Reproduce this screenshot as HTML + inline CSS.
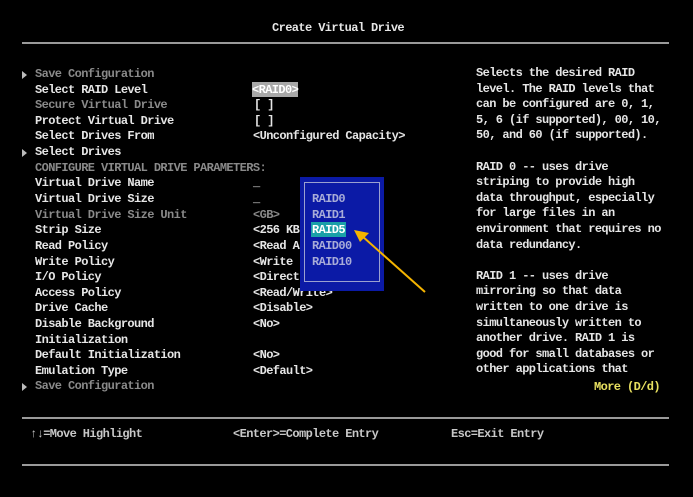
<!DOCTYPE html>
<html><head><style>
body{margin:0;background:#000;width:693px;height:497px;overflow:hidden;position:relative;font-family:"Liberation Mono",monospace;font-size:12px;letter-spacing:-0.6px;font-weight:bold;color:#e6e6e6}
.t{position:absolute;white-space:pre;line-height:16px;height:16px}
.g{color:#8a8a8a}
.hr{position:absolute;left:22px;width:647px;height:2px;background:#9a9a9a}
.tri{position:absolute;width:0;height:0;border-left:5px solid #bbb;border-top:4px solid transparent;border-bottom:4px solid transparent}
.rc{line-height:15.6px;height:auto}
</style></head><body>
<div class="t" style="left:272px;top:20px">Create Virtual Drive</div>
<div class="hr" style="top:42px"></div>
<div class="hr" style="top:417px"></div>
<div class="hr" style="top:464px"></div>

<div class="tri" style="left:22px;top:71px"></div>
<div class="tri" style="left:22px;top:149px"></div>
<div class="tri" style="left:22px;top:383px"></div>

<div class="t g" style="left:35px;top:66px">Save Configuration</div>
<div class="t" style="left:35px;top:82px">Select RAID Level</div>
<div class="t g" style="left:35px;top:97px">Secure Virtual Drive</div>
<div class="t" style="left:35px;top:113px">Protect Virtual Drive</div>
<div class="t" style="left:35px;top:128px">Select Drives From</div>
<div class="t" style="left:35px;top:144px">Select Drives</div>
<div class="t g" style="left:35px;top:160px">CONFIGURE VIRTUAL DRIVE PARAMETERS:</div>
<div class="t" style="left:35px;top:175px">Virtual Drive Name</div>
<div class="t" style="left:35px;top:191px">Virtual Drive Size</div>
<div class="t g" style="left:35px;top:207px">Virtual Drive Size Unit</div>
<div class="t" style="left:35px;top:222px">Strip Size</div>
<div class="t" style="left:35px;top:238px">Read Policy</div>
<div class="t" style="left:35px;top:254px">Write Policy</div>
<div class="t" style="left:35px;top:269px">I/O Policy</div>
<div class="t" style="left:35px;top:285px">Access Policy</div>
<div class="t" style="left:35px;top:300px">Drive Cache</div>
<div class="t" style="left:35px;top:316px">Disable Background</div>
<div class="t" style="left:35px;top:332px">Initialization</div>
<div class="t" style="left:35px;top:347px">Default Initialization</div>
<div class="t" style="left:35px;top:363px">Emulation Type</div>
<div class="t g" style="left:35px;top:378px">Save Configuration</div>

<div class="t" style="left:252px;top:82px;background:#a8a8a8;color:#fff;height:15px">&lt;RAID0&gt;</div>
<div class="t" style="left:254px;top:97px">[ ]</div>
<div class="t" style="left:254px;top:113px">[ ]</div>
<div class="t" style="left:253px;top:128px">&lt;Unconfigured Capacity&gt;</div>
<div class="t" style="left:253px;top:175px">_</div>
<div class="t" style="left:253px;top:191px">_</div>
<div class="t g" style="left:253px;top:207px">&lt;GB&gt;</div>
<div class="t" style="left:253px;top:222px">&lt;256 KB</div>
<div class="t" style="left:253px;top:238px">&lt;Read A</div>
<div class="t" style="left:253px;top:254px">&lt;Write </div>
<div class="t" style="left:253px;top:269px">&lt;Direct</div>
<div class="t" style="left:253px;top:285px">&lt;Read/Write&gt;</div>
<div class="t" style="left:253px;top:300px">&lt;Disable&gt;</div>
<div class="t" style="left:253px;top:316px">&lt;No&gt;</div>
<div class="t" style="left:253px;top:347px">&lt;No&gt;</div>
<div class="t" style="left:253px;top:363px">&lt;Default&gt;</div>

<div style="position:absolute;left:300px;top:177px;width:84px;height:114px;background:#0b1aa6"></div>
<div style="position:absolute;left:304px;top:182px;width:74px;height:98px;border:1px solid #9aa0d0"></div>
<div class="t" style="left:312px;top:191px;color:#a8acd8">RAID0</div>
<div class="t" style="left:312px;top:207px;color:#a8acd8">RAID1</div>
<div class="t" style="left:311px;top:222px;background:#1aa0a8;color:#fff;height:15px;padding:0 1px">RAID5</div>
<div class="t" style="left:312px;top:238px;color:#a8acd8">RAID00</div>
<div class="t" style="left:312px;top:254px;color:#a8acd8">RAID10</div>

<svg style="position:absolute;left:0;top:0" width="693" height="497">
<line x1="425" y1="292" x2="362" y2="236" stroke="#f5b400" stroke-width="2"/>
<polygon points="354,230 369,233 360,242" fill="#f5b400"/>
</svg>

<div class="t rc" style="left:476px;top:66px">Selects the desired RAID
level. The RAID levels that
can be configured are 0, 1,
5, 6 (if supported), 00, 10,
50, and 60 (if supported).

RAID 0 -- uses drive
striping to provide high
data throughput, especially
for large files in an
environment that requires no
data redundancy.

RAID 1 -- uses drive
mirroring so that data
written to one drive is
simultaneously written to
another drive. RAID 1 is
good for small databases or
other applications that</div>
<div class="t" style="left:594px;top:379px;color:#e8e060">More (D/d)</div>

<div class="t" style="left:30px;top:426px;color:#c8c8c8">↑↓=Move Highlight</div>
<div class="t" style="left:233px;top:426px;color:#c8c8c8">&lt;Enter&gt;=Complete Entry</div>
<div class="t" style="left:451px;top:426px;color:#c8c8c8">Esc=Exit Entry</div>
</body></html>
